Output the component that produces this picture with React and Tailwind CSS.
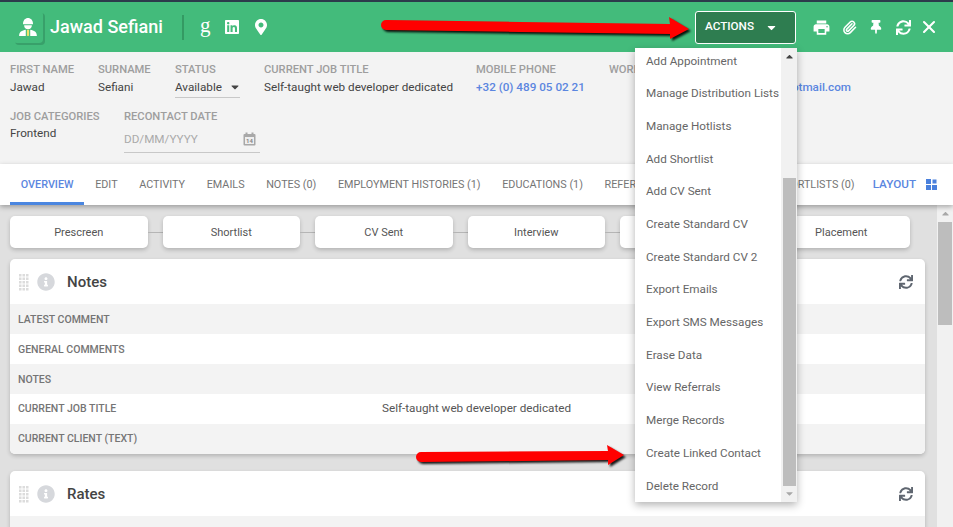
import { FaThumbtack, FaSync, FaLinkedin, FaMapMarkerAlt, FaInfoCircle, FaCaretDown, FaCaretUp } from 'react-icons/fa'
import { MdPrint } from 'react-icons/md'
import { X, Paperclip } from 'lucide-react'

const FIELDS = [
  { label: 'First Name', value: 'Jawad', w: 'w-[88px]' },
  { label: 'Surname', value: 'Sefiani', w: 'w-[77px]' },
]

const TABS = [
  { label: 'Overview', active: true },
  { label: 'Edit' },
  { label: 'Activity' },
  { label: 'Emails' },
  { label: 'Notes (0)' },
  { label: 'Employment Histories (1)' },
  { label: 'Educations (1)' },
  { label: 'Referrals (0)' },
  { label: 'Offers (0)' },
  { label: 'Shortlists (0)' },
]

const STAGES = ['Prescreen', 'Shortlist', 'CV Sent', 'Interview', 'Offer', 'Placement']

const ACTIONS = [
  'Add Appointment',
  'Manage Distribution Lists',
  'Manage Hotlists',
  'Add Shortlist',
  'Add CV Sent',
  'Create Standard CV',
  'Create Standard CV 2',
  'Export Emails',
  'Export SMS Messages',
  'Erase Data',
  'View Referrals',
  'Merge Records',
  'Create Linked Contact',
  'Delete Record',
]

const NOTES_ROWS = [
  { label: 'Latest Comment' },
  { label: 'General Comments' },
  { label: 'Notes' },
  { label: 'Current Job Title', value: 'Self-taught web developer dedicated' },
  { label: 'Current Client (Text)' },
]

function WorkerIcon() {
  return (
    <svg width="20" height="20" viewBox="0 0 18 18">
      <path d="M4.500 6.500C4.500 3 6.500 1 9 1s4.500 2 4.500 5.500z" fill="#fff" />
      <path d="M5.500 7.500h7C12.500 10 11 11 9 11s-3.500-1-3.500-3.500z" fill="#fff" />
      <path d="M1 17c0-3.500 2.500-5 6-5.500V17zM17 17c0-3.500-2.500-5-6-5.500V17z" fill="#fff" />
      <rect x="8" y="11.500" width="2" height="5.500" fill="#f0e26a" />
    </svg>
  )
}

function Grip() {
  return (
    <svg width="10" height="17" viewBox="0 0 10 17" className="shrink-0">
      {[0, 1, 2].map((c) =>
        [0, 1, 2, 3, 4].map((r) => (
          <rect key={`${c}-${r}`} x={c * 3.500} y={r * 3.500} width="2.500" height="2.500" fill="#dcdcdc" />
        ))
      )}
    </svg>
  )
}

function CardHeader({ title }) {
  return (
    <div className="h-[45px] flex items-center pt-px pl-[9px] pr-[11px]">
      <Grip />
      <FaInfoCircle className="ml-[8px] text-[18px] text-[#d6d8dc]" />
      <span className="ml-[12px] text-[15px] font-medium text-[#444]">{title}</span>
      <FaSync className="ml-auto mr-px text-[14px] text-[#5f6670]" />
    </div>
  )
}

export default function App() {
  return (
    <div className="relative w-[953px] h-[527px] overflow-hidden flex flex-col bg-[#e0e0e0] font-['Roboto',sans-serif] text-[11.700px] text-[#555]">
      <div className="h-[2px] bg-[#2c3a4b]" />

      {/* Header */}
      <header className="h-[50px] bg-[#43bb7b] flex items-center text-white pl-[13px]">
        <span className="grid place-items-center w-[30px] h-[32px] rounded shadow-[2px_2px_0_#38a06a]">
          <WorkerIcon />
        </span>
        <h1 className="ml-[7px] w-[132px] text-[18px] font-medium leading-none">Jawad Sefiani</h1>
        <span className="w-[2px] h-[25px] bg-[#349a63]" />
        <span className="ml-[16px] w-[24px] pb-[4px] text-[21px] leading-none font-['Liberation_Serif',serif]">g</span>
        <FaLinkedin className="text-[16px]" />
        <FaMapMarkerAlt className="text-[16px] ml-[13px]" />
        <button className="ml-[426px] w-[101px] h-[33px] flex items-center pl-[9px] bg-[#2e7d50] border border-white rounded-[3px] text-[11.700px] font-medium uppercase">
          Actions
          <FaCaretDown className="ml-[11px] text-[13px]" />
        </button>
        <MdPrint className="ml-[16px] text-[19px]" />
        <Paperclip className="ml-[11px]" size={15} strokeWidth={2.500} />
        <FaThumbtack className="ml-[12px] text-[14px]" />
        <FaSync className="ml-[13px] text-[15px]" />
        <X className="ml-[8px]" size={20} strokeWidth={2.500} />
      </header>

      {/* Record fields */}
      <section className="h-[112px] bg-[#f3f3f3] px-[10px] pt-[11px]">
        <div className="flex h-[47px]">
          {FIELDS.map((f) => (
            <div key={f.label} className={f.w}>
              <div className="text-[11.200px] font-medium uppercase text-[#9e9e9e] leading-[13px]">{f.label}</div>
              <div className="mt-[4px] text-[#444] leading-[14px]">{f.value}</div>
            </div>
          ))}
          <div className="w-[89px]">
            <div className="text-[11.200px] font-medium uppercase text-[#9e9e9e] leading-[13px]">Status</div>
            <div className="mt-[4px] w-[65px] h-[18px] flex items-start border-b border-[#c8c8c8] text-[#444] leading-[14px]">
              Available
              <FaCaretDown className="ml-auto mr-[-1px] mt-[1px] text-[12px] text-[#444]" />
            </div>
          </div>
          <div className="w-[212px]">
            <div className="text-[11.200px] font-medium uppercase text-[#9e9e9e] leading-[13px]">Current Job Title</div>
            <div className="mt-[4px] text-[#444] leading-[14px]">Self-taught web developer dedicated</div>
          </div>
          <div className="w-[133px]">
            <div className="text-[11.200px] font-medium uppercase text-[#9e9e9e] leading-[13px]">Mobile Phone</div>
            <div className="mt-[4px] font-medium text-[#5b86e0] leading-[14px]">+32 (0) 489 05 02 21</div>
          </div>
          <div className="w-[97px]">
            <div className="text-[11.200px] font-medium uppercase text-[#9e9e9e] leading-[13px]">Work Phone</div>
          </div>
          <div>
            <div className="text-[11.200px] font-medium uppercase text-[#9e9e9e] leading-[13px]">Email</div>
            <div className="mt-[4px] font-medium text-[#5b86e0] leading-[14px]">jawad.sefiani@hotmail.com</div>
          </div>
        </div>
        <div className="flex">
          <div className="w-[114px]">
            <div className="text-[11.200px] font-medium uppercase text-[#9e9e9e] leading-[13px]">Job Categories</div>
            <div className="mt-[3px] text-[#444] leading-[14px]">Frontend</div>
          </div>
          <div className="w-[136px]">
            <div className="text-[11.200px] font-medium uppercase text-[#9e9e9e] leading-[13px]">Recontact Date</div>
            <div className="mt-[1px] h-[29px] flex items-center pt-[2px] border-b border-[#c8c8c8] text-[#aaa] leading-[16px]">
              DD/MM/YYYY
              <svg className="ml-auto mr-[4px]" width="13" height="14" viewBox="0 0 13 14">
                <rect x="0.500" y="2" width="12" height="11.500" rx="1" fill="#a8a8a8" />
                <rect x="2" y="5" width="9" height="7" fill="#eee" />
                <rect x="2.500" y="0.500" width="2" height="3" fill="#a8a8a8" />
                <rect x="8.500" y="0.500" width="2" height="3" fill="#a8a8a8" />
                <text x="6.500" y="11" textAnchor="middle" fontSize="6" fontWeight="700" fill="#888">14</text>
              </svg>
            </div>
          </div>
        </div>
      </section>

      {/* Tabs */}
      <nav className="relative z-10 h-[41px] bg-white flex items-stretch pl-[10px] pr-[15px] shadow-[0_2px_5px_rgba(0,0,0,0.3)] uppercase text-[#757575] text-[10.800px]">
        {TABS.map((t) => (
          <span
            key={t.label}
            className={`flex items-center px-[10.800px] pt-[4px] whitespace-nowrap border-b-[3px] ${t.active ? 'border-[#4a86e0] text-[#5b86e0] font-medium' : 'border-transparent'}`}
          >
            {t.label}
          </span>
        ))}
        <span className="ml-auto flex items-center gap-[10px] text-[#5b86e0] text-[11.700px] font-medium">
          Layout
          <svg width="12" height="11" viewBox="0 0 12 11" fill="#4a80dc">
            <rect width="5" height="5" />
            <rect x="6.500" y="0.500" width="4" height="4" />
            <rect y="6" width="5" height="5" />
            <rect x="6" y="6" width="5" height="5" />
          </svg>
        </span>
      </nav>

      {/* Body */}
      <div className="flex-1 min-h-0 flex">
        <main className="flex-1 min-w-0 pl-[10px] pr-[12px] pt-[11px] overflow-hidden">
          <div className="flex items-center h-[32px] pr-[15px]">
            {STAGES.map((s, i) => (
              <div key={s} className="contents">
                {i > 0 && <span className="w-[15px] h-px bg-[#b5b5b5] shrink-0" />}
                <span className="flex-1 h-full grid place-items-center pt-[2px] bg-white rounded-[5px] text-[#555] text-[11px] shadow-[0_2px_4px_rgba(0,0,0,0.2)]">
                  {s}
                </span>
              </div>
            ))}
          </div>

          <div className="mt-[11px] bg-white rounded-[5px] shadow-[0_2px_4px_rgba(0,0,0,0.2)] overflow-hidden">
            <CardHeader title="Notes" />
            {NOTES_ROWS.map((r, i) => (
              <div key={r.label} className={`h-[30px] flex items-center pl-[8px] ${i < 3 ? 'pt-px' : ''} ${i % 2 === 0 ? 'bg-[#f3f3f3]' : 'bg-white'}`}>
                <span className="w-[364px] uppercase text-[10.500px] font-medium text-[#757575]">{r.label}</span>
                <span className="text-[#555]">{r.value}</span>
              </div>
            ))}
          </div>

          <div className="mt-[17px] bg-white rounded-t-[5px] shadow-[0_2px_4px_rgba(0,0,0,0.2)]">
            <CardHeader title="Rates" />
            <div className="h-[30px] bg-[#f3f3f3]" />
          </div>
        </main>

        {/* Page scrollbar */}
        <div className="w-[16px] bg-[#f1f1f1] flex flex-col items-center">
          <FaCaretUp className="mt-[3px] text-[#a8a8a8] text-[11px]" />
          <div className="mt-[3px] w-[14px] h-[103px] bg-[#bdbdbd]" />
        </div>
      </div>

      {/* Actions menu */}
      <div className="absolute z-20 left-[635px] top-[48px] w-[162px] h-[454px] flex bg-white shadow-[0_3px_8px_rgba(0,0,0,0.3)] overflow-hidden">
        <ul className="flex-1 min-w-0 mt-[-3px] pl-[11px] text-[#666] whitespace-nowrap">
          {ACTIONS.map((a) => (
            <li key={a} className="h-[32.700px] flex items-center">{a}</li>
          ))}
        </ul>
        <div className="w-[16px] bg-[#f1f1f1] flex flex-col items-center">
          <FaCaretUp className="mt-[3px] text-[#444] text-[11px]" />
          <div className="mt-[116px] w-[13px] h-[308px] bg-[#bdbdbd]" />
          <FaCaretDown className="mt-[2px] text-[#a8a8a8] text-[11px]" />
        </div>
      </div>

      {/* Annotation arrows */}
      <svg className="absolute z-30 left-0 top-0 pointer-events-none drop-shadow-[2px_2px_1px_rgba(0,0,0,0.9)]" width="953" height="527">
        <path d="M386 20 L670 24 L669 17 L689 29 L670 39 L670 34 L386 30 A5 5 0 0 1 386 20 Z" fill="#ff0000" />
        <path d="M421 452 L608 451 L607 445 L624 455 L608 465 L608 460 L421 462 A5 5 0 0 1 421 452 Z" fill="#ff0000" />
      </svg>
    </div>
  )
}
